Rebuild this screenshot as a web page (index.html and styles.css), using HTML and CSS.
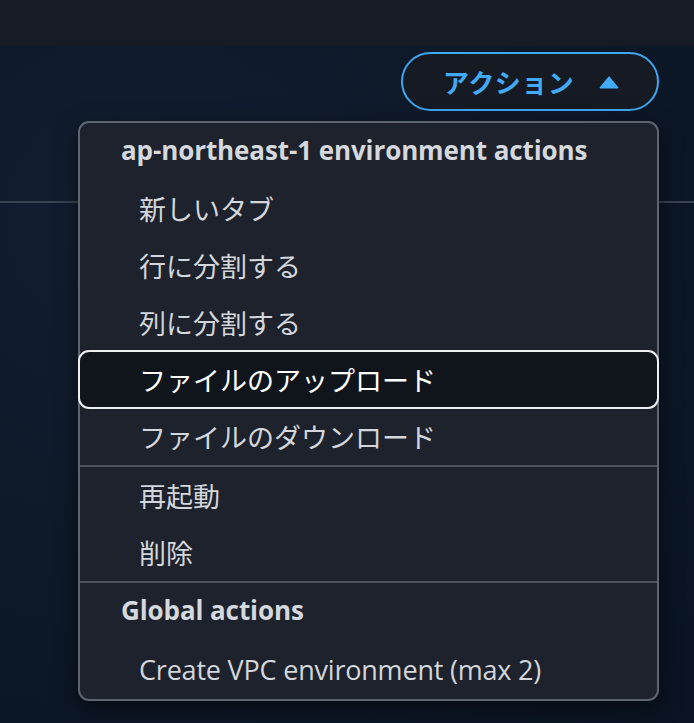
FILE: index.html
```html
<!DOCTYPE html>
<html lang="ja">
<head>
<meta charset="utf-8">
<title>Actions</title>
<link rel="stylesheet" href="styles.css">
</head>
<body>
  <div class="topbar"></div>
  <header class="page-header">
    <div class="actions-wrap">
      <button class="actions-btn" type="button">
        <span class="actions-label">アクション</span>
        <svg class="caret" width="20" height="13" viewBox="0 0 20 13" aria-hidden="true">
          <path d="M10 1.2 L18.6 11.8 L1.4 11.8 Z" fill="#42aaf7" stroke="#42aaf7" stroke-width="1.6" stroke-linejoin="round"/>
        </svg>
      </button>
      <div class="menu" role="menu">
        <div class="group">
          <div class="group-title" lang="en">ap-northeast-1 environment actions</div>
          <div class="item">新しいタブ</div>
          <div class="item">行に分割する</div>
          <div class="item">列に分割する</div>
          <div class="item item-active">ファイルのアップロード</div>
          <div class="item">ファイルのダウンロード</div>
        </div>
        <div class="group">
          <div class="item">再起動</div>
          <div class="item">削除</div>
        </div>
        <div class="group">
          <div class="group-title" lang="en">Global actions</div>
          <div class="item item-latin" lang="en">Create VPC environment (max 2)</div>
        </div>
      </div>
    </div>
  </header>
  <main class="content"></main>
</body>
</html>
```

FILE: styles.css
```css
* {
  box-sizing: border-box;
}

html, body {
  margin: 0;
  padding: 0;
}

body {
  width: 694px;
  height: 723px;
  overflow: hidden;
  background: radial-gradient(ellipse at 20% 30%, #121e30 0%, #0d1828 55%, #0a1422 100%);
  font-family: "Open Sans", "Noto Sans CJK JP", sans-serif;
  color: #d1d5db;
}

.topbar {
  height: 46px;
  background: #161b25;
}

.page-header {
  height: 157px;
  border-bottom: 2px solid #39424f;
  display: flex;
  justify-content: flex-end;
  align-items: flex-start;
  padding: 6px 35px 0 0;
}

.actions-wrap {
  position: relative;
}

.actions-btn {
  display: flex;
  align-items: center;
  gap: 25px;
  height: 59px;
  width: 258px;
  padding: 0 0 0 40px;
  border: 2px solid #3fa6f0;
  border-radius: 30px;
  background: #151a23;
  color: #42aaf7;
  font-family: "Noto Sans CJK JP", sans-serif;
  font-weight: 700;
  font-size: 26px;
  letter-spacing: 0.5px;
  cursor: pointer;
}

.actions-label {
  line-height: 1;
}

.caret {
  display: block;
  margin-top: 1px;
}

.menu {
  position: absolute;
  top: 69px;
  right: 0;
  width: 581px;
  background: #1d222c;
  border: 2px solid #5d6571;
  border-radius: 11px;
  box-shadow: 0 6px 22px rgba(0, 0, 0, 0.55);
  z-index: 2;
}

.group + .group {
  border-top: 2px solid #4b525d;
}

.group-title {
  height: 57px;
  display: flex;
  align-items: center;
  padding: 0 0 4px 41px;
  font-family: "Open Sans", "Noto Sans CJK JP", sans-serif;
  font-weight: 700;
  font-size: 26px;
  letter-spacing: -0.1px;
  color: #d5d8dd;
}

.item {
  height: 57px;
  display: flex;
  align-items: center;
  padding-left: 59px;
  font-family: "Noto Sans CJK JP", sans-serif;
  font-size: 27px;
  color: #d3d6db;
}

.item-latin {
  font-family: "Open Sans", "Noto Sans CJK JP", sans-serif;
  font-size: 27px;
  letter-spacing: -0.2px;
}

.group:last-child .item:last-child {
  height: 59px;
}

.item-active {
  height: 59px;
  margin: -1px -2px;
  padding-left: 59px;
  border: 2px solid #eceef0;
  border-radius: 11px;
  background: #10151c;
  color: #ffffff;
}
```
